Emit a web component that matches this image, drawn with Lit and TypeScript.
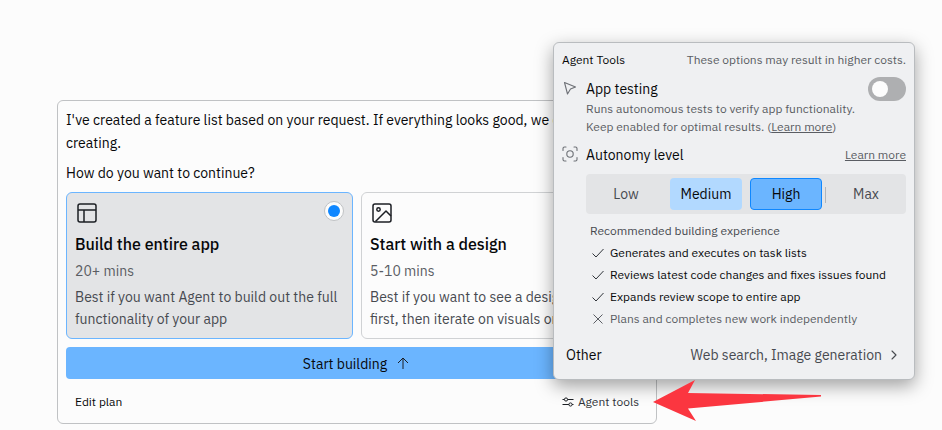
import { LitElement, html, css, svg } from "lit";
import { customElement, state } from "lit/decorators.js";
import { classMap } from "lit/directives/class-map.js";

const check = html`<svg class="mark" viewBox="0 0 12 12" aria-hidden="true"><path d="M0.5 6.5 4 10 11.5 2" /></svg>`;
const cross = html`<svg class="mark" viewBox="0 0 12 12" aria-hidden="true"><path d="M1.5 1.5 10.5 10.5M10.5 1.5 1.5 10.5" /></svg>`;

const layoutIcon = svg`<rect x="3" y="3" width="18" height="18" rx="2" /><path d="M3 9h18M9 9v12" />`;
const imageIcon = svg`<rect x="3" y="3" width="18" height="18" rx="2" /><circle cx="8.5" cy="8.5" r="1.7" /><path d="M5.5 20.5 16 10l5 5" />`;

const choices = [
  {
    id: "app",
    icon: layoutIcon,
    title: "Build the entire app",
    time: "20+ mins",
    text: "Best if you want Agent to build out the full functionality of your app",
  },
  {
    id: "design",
    icon: imageIcon,
    title: "Start with a design",
    time: "5-10 mins",
    text: "Best if you want to see a design prototype first, then iterate on visuals or features",
  },
];

const levels = ["Low", "Medium", "High", "Max"];

const experience = [
  { text: "Generates and executes on task lists", on: true },
  { text: "Reviews latest code changes and fixes issues found", on: true },
  { text: "Expands review scope to entire app", on: true },
  { text: "Plans and completes new work independently", on: false },
];

@customElement("tools-popover")
export class ToolsPopover extends LitElement {
  @state() level = "High";

  static styles = css`
    :host {
      display: block;
      box-sizing: border-box;
      padding: 8px;
      border: 1px solid #b9bcbf;
      border-radius: 6px;
      background: #eff0f2;
      box-shadow: 0 6px 18px rgba(0, 0, 0, 0.36);
      color: #07080a;
      font-size: 12px;
      line-height: 18px;
    }
    .head, .other, .row {
      display: flex;
      align-items: center;
      justify-content: space-between;
    }
    .head { margin-bottom: 9px; }
    .muted, a { color: #5a5d63; }
    h2, h3, p, ul, fieldset { margin: 0; padding: 0; border: 0; }
    h2 { font-size: 12px; font-weight: 400; }
    h3 { font-size: 14px; font-weight: 400; }
    .tool {
      display: grid;
      grid-template-columns: 16px minmax(0, 1fr);
      column-gap: 8px;
      margin-bottom: 8px;
    }
    .glyph {
      width: 16px;
      height: 16px;
      fill: none;
      stroke: #6d7076;
      stroke-width: 1.1;
      stroke-linejoin: round;
      stroke-linecap: round;
    }
    .tool .glyph { margin-top: 2px; }
    .row { height: 22px; }
    .switch {
      appearance: none;
      box-sizing: border-box;
      width: 38px;
      height: 24px;
      margin: 0;
      padding: 4px;
      border-radius: 12px;
      background: #aeafb1;
    }
    .switch::before {
      content: "";
      display: block;
      width: 16px;
      height: 16px;
      border-radius: 50%;
      background: #fcfcfc;
    }
    .switch:checked { background: #0f87ff; }
    .switch:checked::before { margin-left: auto; }
    .levels {
      display: grid;
      grid-template-columns: repeat(4, 1fr);
      gap: 8px;
      margin-top: 8px;
      padding: 4px;
      border-radius: 4px;
      background: #e3e4e6;
    }
    .level {
      position: relative;
      display: flex;
      align-items: center;
      justify-content: center;
      height: 30px;
      border: 1px solid transparent;
      border-radius: 4px;
      color: #474a50;
      font-size: 14px;
    }
    .level input {
      appearance: none;
      position: absolute;
      inset: 0;
      margin: 0;
    }
    .tinted { background: #b2d9ff; color: #07080a; }
    .picked { background: #6bb5ff; border-color: #0f87ff; color: #07080a; }
    .split::before {
      content: "";
      position: absolute;
      left: -6px;
      top: 8px;
      width: 1px;
      height: 16px;
      background: #b4b6ba;
    }
    .caption { margin: 8px 4px 2px; color: #474a50; }
    ul { list-style: none; margin: 0 4px; }
    li {
      display: flex;
      align-items: center;
      gap: 6px;
      padding-left: 2px;
      line-height: 22px;
      white-space: nowrap;
    }
    .mark {
      width: 12px;
      height: 12px;
      fill: none;
      stroke: #30343a;
      stroke-width: 1;
    }
    .muted .mark { stroke: #5a5d63; }
    .other {
      width: 100%;
      padding: 7px 4px 6px;
      border: 0;
      background: none;
      color: #07080a;
      font: inherit;
      font-size: 14px;
      line-height: 20px;
    }
    .value {
      display: flex;
      align-items: center;
      gap: 4px;
      color: #474a50;
    }
    .value .glyph { stroke: #474a50; }
  `;

  render() {
    return html`
      <header class="head">
        <h2>Agent Tools</h2>
        <span class="muted">These options may result in higher costs.</span>
      </header>
      <section class="tool">
        <svg class="glyph" viewBox="0 0 16 16" aria-hidden="true">
          <path d="M2.5 2.5 13.5 7 8.5 9 5.500 14Z" />
        </svg>
        <div>
          <div class="row">
            <h3><label for="testing">App testing</label></h3>
            <input class="switch" id="testing" type="checkbox" role="switch" />
          </div>
          <p class="muted">
            Runs autonomous tests to verify app functionality.<br />
            Keep enabled for optimal results. (<a href="#testing">Learn more</a>)
          </p>
        </div>
      </section>
      <section class="tool">
        <svg class="glyph" viewBox="0 0 16 16" aria-hidden="true">
          <circle cx="8" cy="8" r="3.2" />
          <path d="M1 4.5V2.5Q1 1 2.5 1H4M12 1h1.5Q15 1 15 2.5v2M15 11.5v2Q15 15 13.5 15H12M4 15H2.5Q1 15 1 13.5v-2" />
        </svg>
        <div>
          <div class="row">
            <h3>Autonomy level</h3>
            <a href="#levels">Learn more</a>
          </div>
          <fieldset class="levels" id="levels" aria-label="Autonomy level">
            ${levels.map(
              (name) => html`
                <label
                  class=${classMap({
                    level: true,
                    tinted: name === "Medium" && this.level !== name,
                    picked: this.level === name,
                    split: name === "Max",
                  })}
                >
                  <input
                    type="radio"
                    name="level"
                    .checked=${this.level === name}
                    @change=${() => (this.level = name)}
                  />${name}
                </label>
              `,
            )}
          </fieldset>
          <p class="caption">Recommended building experience</p>
          <ul>
            ${experience.map(
              (item) => html`<li class=${classMap({ muted: !item.on })}>${item.on ? check : cross}${item.text}</li>`,
            )}
          </ul>
        </div>
      </section>
      <button class="other" type="button">
        <span>Other</span>
        <span class="value">
          Web search, Image generation
          <svg class="glyph" viewBox="0 0 16 16" aria-hidden="true"><path d="M6 4 10 8 6 12" /></svg>
        </span>
      </button>
    `;
  }
}

@customElement("app-root")
export class AppRoot extends LitElement {
  @state() choice = "app";

  static styles = css`
    :host {
      display: block;
      box-sizing: border-box;
      min-height: 100vh;
      padding: 100px 28px 6px 57px;
      background: #fcfcfc;
      color: #07080a;
      font-family: "IBM Plex Sans", Roboto, "Liberation Sans", sans-serif;
      font-size: 14px;
      line-height: 22px;
    }
    .plan {
      position: relative;
      box-sizing: border-box;
      max-width: 600px;
      padding: 8px;
      border: 1px solid #c0c2c4;
      border-radius: 6px;
    }
    p, fieldset { margin: 0; padding: 0; border: 0; min-width: 0; }
    .intro { line-height: 23px; margin-bottom: 7px; }
    .choices {
      display: grid;
      grid-template-columns: repeat(2, minmax(0, 1fr));
      gap: 8px;
      margin: 8px 0;
    }
    .choice {
      display: flex;
      flex-direction: column;
      gap: 4px;
      padding: 8px;
      border: 1px solid #d0d2d4;
      border-radius: 6px;
    }
    .chosen { border-color: #6bb5ff; background: #e3e4e6; }
    .top {
      display: flex;
      align-items: flex-start;
      justify-content: space-between;
      height: 24px;
    }
    .icon {
      width: 24px;
      height: 24px;
      fill: none;
      stroke: #1c1f24;
      stroke-width: 1.5;
      stroke-linejoin: round;
    }
    .dot {
      appearance: none;
      box-sizing: border-box;
      width: 20px;
      height: 20px;
      margin: 0;
      padding: 3px;
      border: 1px solid #c0c2c4;
      border-radius: 50%;
      background: #fcfcfc;
    }
    .dot:checked::before {
      content: "";
      display: block;
      width: 12px;
      height: 12px;
      border-radius: 50%;
      background: #0f87ff;
    }
    .title {
      margin-top: 3px;
      font-size: 16px;
      font-weight: 500;
      line-height: 24px;
    }
    .time { color: #5a5d63; }
    .text { color: #474a50; }
    button { border: 0; background: none; color: inherit; font: inherit; }
    .start {
      display: flex;
      align-items: center;
      justify-content: center;
      gap: 8px;
      width: 100%;
      height: 32px;
      padding: 2px 6px 0;
      border-radius: 4px;
      background: #6bb5ff;
    }
    .small {
      width: 16px;
      height: 16px;
      fill: none;
      stroke: #1c1f24;
      stroke-width: 1;
    }
    .foot {
      display: flex;
      justify-content: space-between;
      padding: 12px 9px 2px;
      font-size: 12px;
      line-height: 22px;
    }
    .foot button { display: flex; align-items: center; gap: 4px; padding: 0; }
    .foot .tools { color: #30343a; }
    .foot .small { width: 12px; height: 12px; }
    .popover {
      position: absolute;
      left: calc(100% - 103px);
      top: -59px;
      width: 362px;
    }
    .arrow {
      position: absolute;
      left: calc(100% - 3px);
      bottom: 1px;
      width: 168px;
      height: 42px;
      fill: #fb3640;
    }
  `;

  render() {
    return html`
      <main class="plan">
        <p class="intro">
          I've created a feature list based on your request. If everything looks good, we can start<br />
          creating.
        </p>
        <p id="question">How do you want to continue?</p>
        <fieldset class="choices" aria-labelledby="question">
          ${choices.map(
            (c) => html`
              <label class=${classMap({ choice: true, chosen: this.choice === c.id })}>
                <span class="top">
                  <svg class="icon" viewBox="0 0 24 24" aria-hidden="true">${c.icon}</svg>
                  <input
                    class="dot"
                    type="radio"
                    name="choice"
                    .checked=${this.choice === c.id}
                    @change=${() => (this.choice = c.id)}
                  />
                </span>
                <span class="title">${c.title}</span>
                <span class="time">${c.time}</span>
                <span class="text">${c.text}</span>
              </label>
            `,
          )}
        </fieldset>
        <button class="start" type="button">
          Start building
          <svg class="small" viewBox="0 0 16 16" aria-hidden="true"><path d="M8 13V2M3 7l5-5 5 5" /></svg>
        </button>
        <footer class="foot">
          <button type="button">Edit plan</button>
          <button class="tools" type="button">
            <svg class="small" viewBox="0 0 12 12" aria-hidden="true">
              <circle cx="4" cy="3.5" r="1.6" />
              <circle cx="8.5" cy="8.5" r="1.6" />
              <path d="M0.5 3.5H2.4M5.6 3.5H11.5M0.5 8.5H6.9M10.1 8.5H11.5" />
            </svg>
            Agent tools
          </button>
        </footer>
        <tools-popover class="popover"></tools-popover>
        <svg class="arrow" viewBox="0 0 168 42" aria-hidden="true">
          <path d="M0 22 42 0 35 13 168 15v1.5L35 28.5 43 41Z" />
        </svg>
      </main>
    `;
  }
}
